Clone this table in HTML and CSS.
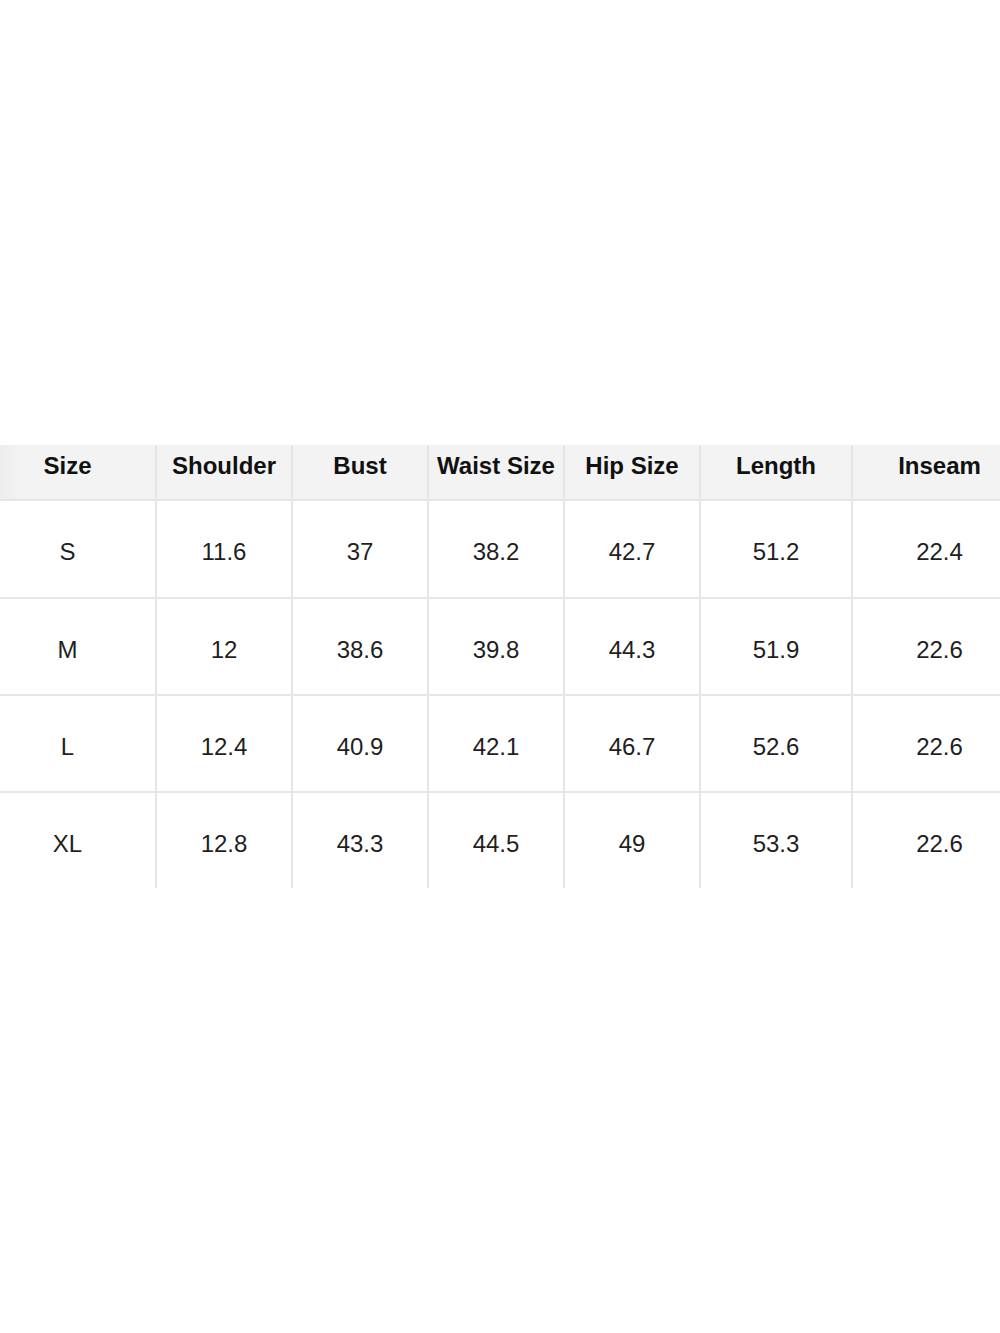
FILE: index.html
```html
<!DOCTYPE html>
<html lang="en">
<head>
<meta charset="utf-8">
<title>Size Chart</title>
<link rel="stylesheet" href="styles.css">
</head>
<body>
<div class="chart">
  <div class="cell head c1">Size</div>
  <div class="cell head">Shoulder</div>
  <div class="cell head">Bust</div>
  <div class="cell head">Waist Size</div>
  <div class="cell head">Hip Size</div>
  <div class="cell head">Length</div>
  <div class="cell head c7">Inseam</div>

  <div class="cell c1">S</div>
  <div class="cell">11.6</div>
  <div class="cell">37</div>
  <div class="cell">38.2</div>
  <div class="cell">42.7</div>
  <div class="cell">51.2</div>
  <div class="cell c7">22.4</div>

  <div class="cell c1">M</div>
  <div class="cell">12</div>
  <div class="cell">38.6</div>
  <div class="cell">39.8</div>
  <div class="cell">44.3</div>
  <div class="cell">51.9</div>
  <div class="cell c7">22.6</div>

  <div class="cell c1">L</div>
  <div class="cell">12.4</div>
  <div class="cell">40.9</div>
  <div class="cell">42.1</div>
  <div class="cell">46.7</div>
  <div class="cell">52.6</div>
  <div class="cell c7">22.6</div>

  <div class="cell c1 last">XL</div>
  <div class="cell last">12.8</div>
  <div class="cell last">43.3</div>
  <div class="cell last">44.5</div>
  <div class="cell last">49</div>
  <div class="cell last">53.3</div>
  <div class="cell c7 last">22.6</div>
</div>
</body>
</html>
```
FILE: styles.css
```css
html, body {
  margin: 0;
  padding: 0;
  background: #ffffff;
}

body {
  font-family: "Liberation Sans", Arial, sans-serif;
  color: #1f1f1f;
  width: 1000px;
  height: 1333px;
  overflow: hidden;
}

.chart {
  margin-top: 445px;
  display: grid;
  grid-template-columns: 157px 136px 136px 136px 136px 152px 147px;
  grid-template-rows: 56px 98px 97px 97px 95px;
}

.cell {
  box-sizing: border-box;
  display: flex;
  align-items: center;
  justify-content: center;
  font-size: 24px;
  border-right: 2px solid #e6e6e6;
  border-bottom: 2px solid #e6e6e6;
  padding-top: 6px;
}

.cell.head {
  background: #f3f3f3;
  font-weight: bold;
  color: #111111;
  align-items: flex-start;
  padding-top: 7px;
}

.cell.c1 {
  padding-right: 20px;
}

.cell.c1.head {
  background: linear-gradient(to right, #ececec 0px, #f3f3f3 18px);
}

.cell.c7 {
  border-right: none;
  padding-left: 26px;
}

.cell.last {
  border-bottom: none;
}
```
